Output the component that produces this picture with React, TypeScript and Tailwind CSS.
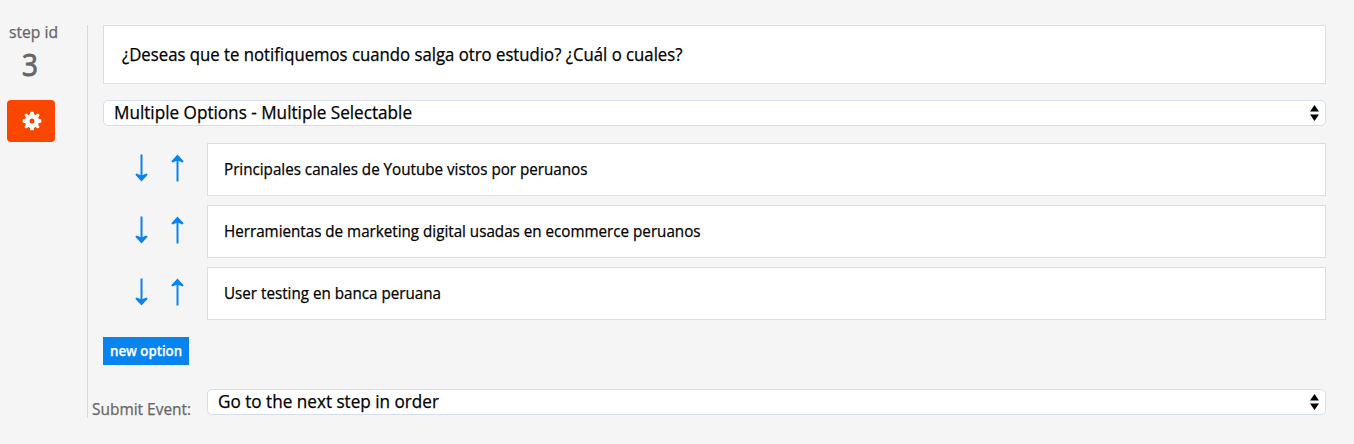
import React from "react";

function Gear() {
  return (
    <svg width="20" height="20" viewBox="-10 -10 20 20" fill="#fff">
      <path
        fillRule="evenodd"
        d="M-1.5-9.3h3l.7 2.6 1.4.6L6-7.6 7.6-6 6.1-3.6l.6 1.4 2.6.7v3l-2.6.7-.6 1.4L7.6 6 6 7.6 3.6 6.1l-1.4.6-.7 2.6h-3l-.7-2.6-1.4-.6L-6 7.6-7.6 6l1.5-2.4-.6-1.4-2.6-.7v-3l2.6-.7.6-1.4L-7.6-6-6-7.6l2.4 1.5 1.4-.6zM0-2.5a2.5 2.5 0 1 0 0 5a2.5 2.5 0 0 0 0-5z"
      />
    </svg>
  );
}

function Arrow({ up = false }: { up?: boolean }) {
  return (
    <svg width="14" height="28" viewBox="0 0 14 28" className={up ? "rotate-180" : ""}>
      <path d="M6.5 .5V25" stroke="#0784ee" strokeWidth="2" />
      <path d="M6.5 27.5L.3 20.8l1.2-1.4L6.5 21.5l5-2.1 1.2 1.4z" fill="#0784ee" />
    </svg>
  );
}

function Select({ children }: { children: React.ReactNode }) {
  return (
    <div className="flex h-[26px] w-full items-center justify-between rounded-[5px] border border-[#d5deed] bg-white pr-[6px] pl-[10px] text-[18px] leading-none text-black">
      <span className="origin-left scale-x-[0.952] pb-[2px]">{children}</span>
      <svg width="9" height="16" viewBox="0 0 9 16" fill="#000">
        <path d="M4.5 0L9 6.5H0zM4.5 16L9 9.5H0z" />
      </svg>
    </div>
  );
}

const options = [
  "Principales canales de Youtube vistos por peruanos",
  "Herramientas de marketing digital usadas en ecommerce peruanos",
  "User testing en banca peruana",
];

export default function App() {
  return (
    <div className="flex h-[444px] bg-[#f5f5f5] pt-[25px] pr-[28px] font-['Open_Sans',sans-serif] [-webkit-text-stroke:0.25px]">
      <aside className="flex w-[87px] shrink-0 flex-col text-[#666]">
        <span className="ml-[9px] h-[15px] origin-left scale-x-[0.98] text-[16px] leading-[15px] whitespace-nowrap">step id</span>
        <span className="mt-[7px] ml-[22px] h-[34px] origin-left scale-x-[0.9] text-[31px] leading-[35px] [-webkit-text-stroke:0.9px]">3</span>
        <button className="mt-[19px] ml-[7px] flex h-[42px] w-[48px] items-center justify-center rounded-[4px] bg-[#fa4700] pl-px">
          <Gear />
        </button>
      </aside>
      <main className="h-[393px] min-w-0 flex-1 border-l border-[#d8d8d8] pl-[15px]">
        <div className="flex h-[59px] items-center border border-[#d5deed] bg-white pl-[18px] text-[18px] text-black">
          <span className="origin-left scale-x-[0.93]">¿Deseas que te notifiquemos cuando salga otro estudio? ¿Cuál o cuales?</span>
        </div>
        <div className="mt-4">
          <Select>Multiple Options - Multiple Selectable</Select>
        </div>
        <div className="mt-[17px] flex flex-col gap-[9px]">
          {options.map((text) => (
            <div key={text} className="flex h-[53px]">
              <div className="flex w-[104px] shrink-0 gap-[21px] pt-[11px] pl-[32px]">
                <Arrow />
                <Arrow up />
              </div>
              <div className="flex flex-1 items-center border border-[#d5deed] bg-white pl-[16px] text-[16px] text-black">
                <span className="origin-left scale-x-[0.949] pb-[2px]">{text}</span>
              </div>
            </div>
          ))}
        </div>
        <button className="mt-[17px] flex h-[28px] w-[86px] items-center justify-center bg-[#0784ee] text-[14px] font-semibold whitespace-nowrap text-white">
          <span className="scale-x-[0.947] pb-[2px]">new option</span>
        </button>
        <div className="mt-[24px] -ml-[11px] flex">
          <div className="w-[115px] shrink-0 pt-[10px] text-[16px] leading-[20px] text-[#666]">
            <span className="block origin-left scale-x-[0.965]">Submit Event:</span>
          </div>
          <Select>Go to the next step in order</Select>
        </div>
      </main>
    </div>
  );
}
